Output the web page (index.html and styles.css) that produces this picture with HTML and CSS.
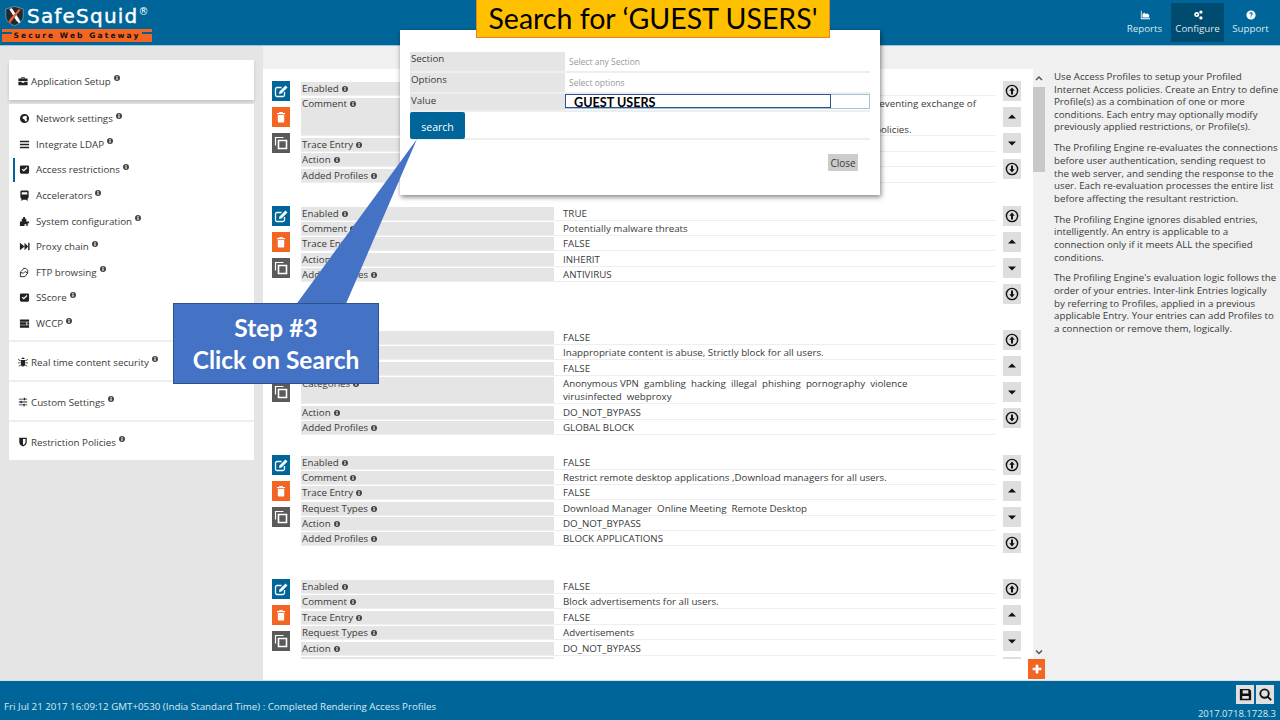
FILE: index.html
```html
<!DOCTYPE html>
<html lang="en">
<head>
	<meta charset="utf-8">
	<title>SafeSquid - Access Profiles</title>
	<link rel="stylesheet" href="styles.css">
</head>
<body>
	<svg class="sprite" xmlns="http://www.w3.org/2000/svg">
		<symbol id="i-info" viewBox="0 0 8 8"><circle cx="4" cy="4" r="4"/><rect x="3.2" y="3.2" width="1.6" height="3.2" fill="#fff"/><rect x="3.2" y="1.4" width="1.6" height="1.2" fill="#fff"/></symbol>
		<symbol id="i-case" viewBox="0 0 12 12"><path d="M4 3V1.5h4V3h3.5v3h-11V3zM5 3h2V2.500H5zM.5 7h4v1h3V7h4v4h-11z"/></symbol>
		<symbol id="i-globe" viewBox="0 0 12 12"><path d="M6 1a5 5 0 1 0 0 10A5 5 0 0 0 6 1zm1 2 2 1-1 2 1 2-2 1.500-1-2.500-2-1V4z"/></symbol>
		<symbol id="i-bars" viewBox="0 0 12 12"><path d="M1 2h10v1.600H1zM1 5.200h10v1.600H1zM1 8.400h10V10H1z"/></symbol>
		<symbol id="i-check" viewBox="0 0 12 12"><path fill-rule="evenodd" d="M2.500 1.500h7a1.500 1.500 0 0 1 1.500 1.500v6a1.500 1.500 0 0 1-1.500 1.500h-7A1.500 1.500 0 0 1 1 9V3a1.500 1.500 0 0 1 1.500-1.500zM3 6l2.200 2.200L9.200 4.300 8.300 3.400 5.200 6.400 3.900 5.100z"/></symbol>
		<symbol id="i-train" viewBox="0 0 12 12"><path fill-rule="evenodd" d="M3 .5h6A1.500 1.500 0 0 1 10.500 2v6A1.500 1.500 0 0 1 9 9.500l1 2H8.500l-.5-1H4l-.5 1H2l1-2A1.500 1.500 0 0 1 1.500 8V2A1.500 1.500 0 0 1 3 .5zM3 2.500V5h6V2.500z"/></symbol>
		<symbol id="i-puzzle" viewBox="0 0 12 12"><path d="M3 3h1.500V1h2v2H8v3h3v2H9.500v3H8V9H6v2H1V6h2z"/></symbol>
		<symbol id="i-forward" viewBox="0 0 12 12"><path d="M1 2 6 6 1 10zM6 2l4 4-4 4zM10 2h1.500v8H10z"/></symbol>
		<symbol id="i-files" viewBox="0 0 12 12"><path fill="none" stroke="#222" d="M4.500 1.500h3l2 2v3M2 5l3-3M1.500 5.500v5h5l3-4-3-1.500-2 2z"/></symbol>
		<symbol id="i-server" viewBox="0 0 12 12"><path d="M1 1.500h10v2.600H1zM1 4.700h7v2.600H1zM9 4.700h2v2.600H9zM1 7.900h10v2.600H1z"/></symbol>
		<symbol id="i-bug" viewBox="0 0 12 12"><path d="M4 2.500a2 2 0 0 1 4 0zM3.500 3.500h5V9A2.500 2.500 0 0 1 6 11.500 2.500 2.500 0 0 1 3.500 9zM.5 2.500l3 2-.5.700-3-2zM11.500 2.500l-3 2 .5.700 3-2zM0 6.500h3v1H0zM9 6.500h3v1H9zM3 9l-2.500 2 .5.500L3.500 10zM9 9l2.500 2-.5.500L8.500 10z"/></symbol>
		<symbol id="i-sliders" viewBox="0 0 12 12"><path d="M1 2h10v1H1zM7 1h1.500v3H7zM1 5.500h10v1H1zM3 4.500h1.500v3H3zM1 9h10v1H1zM6.500 8H8v3H6.500z"/></symbol>
		<symbol id="i-shield" viewBox="0 0 12 12"><path fill-rule="evenodd" d="M1.500 1h9v5c0 3-2.500 4.500-4.500 5.500C4 10.500 1.500 9 1.500 6zM6 2.500v7.200C7.500 9 9 8 9 6V2.500z"/></symbol>
		<symbol id="i-edit" viewBox="0 0 16 16"><path fill="none" stroke="#fff" stroke-width="1.300" d="M11.500 9v3a1.500 1.500 0 0 1-1.500 1.500H4A1.500 1.500 0 0 1 2.500 12V6A1.500 1.500 0 0 1 4 4.500h4.500"/><path fill="#fff" d="M6.500 8.500 12.500 2.500 14.500 4.500 8.500 10.500 6 11z"/></symbol>
		<symbol id="i-trash" viewBox="0 0 16 16"><path fill="#fff" d="M6.500 3h3l.5 1h2v1.200H4V4h2zM4.800 6h6.400v6.500a1 1 0 0 1-1 1H5.800a1 1 0 0 1-1-1z"/></symbol>
		<symbol id="i-copy" viewBox="0 0 16 16"><path fill="none" stroke="#fff" stroke-width="1.200" d="M2.500 10.500v-8h8"/><path fill="none" stroke="#fff" stroke-width="1.600" d="M5.500 5.500h8v8h-8z"/></symbol>
		<symbol id="i-up-c" viewBox="0 0 16 16"><circle cx="8" cy="8" r="5.600" fill="none" stroke="#111" stroke-width="1.400"/><path d="M8 4.500 10.700 7.800H9v3.700H7V7.800H5.300z"/></symbol>
		<symbol id="i-down-c" viewBox="0 0 16 16"><circle cx="8" cy="8" r="5.600" fill="none" stroke="#111" stroke-width="1.400"/><path d="M8 11.500 10.700 8.200H9V4.500H7v3.700H5.300z"/></symbol>
		<symbol id="i-caret-up" viewBox="0 0 16 16"><path d="M8 5.500 12 9.500H4z"/></symbol>
		<symbol id="i-caret-down" viewBox="0 0 16 16"><path d="M8 10.500 12 6.500H4z"/></symbol>
		<symbol id="i-chev-up" viewBox="0 0 8 8"><path fill="none" stroke="#555" stroke-width="1.500" d="M1 6 4 3l3 3"/></symbol>
		<symbol id="i-chev-down" viewBox="0 0 8 8"><path fill="none" stroke="#555" stroke-width="1.500" d="M1 2.500l3 3 3-3"/></symbol>
		<symbol id="i-plus" viewBox="0 0 16 16"><path fill="#fff" d="M6.500 3h3v3.500H13v3H9.500V13h-3V9.500H3v-3h3.500z"/></symbol>
		<symbol id="i-save" viewBox="0 0 16 16"><path fill-rule="evenodd" d="M2 2h10l2 2v10H2zM5 3.500V7h6V3.500zM4.500 9.500v3h7v-3z"/></symbol>
		<symbol id="i-search" viewBox="0 0 16 16"><path fill="none" stroke="#111" stroke-width="2" d="M7 2.500a4.500 4.500 0 1 0 0 9 4.500 4.500 0 0 0 0-9zM10.500 10.500l3.500 3.500"/></symbol>
		<symbol id="i-chart" viewBox="0 0 12 12"><path fill="#fff" d="M1 1h1v9h10v1H1zM3 9V5l2-2 2 2 1.500-1L11 6v3z"/></symbol>
		<symbol id="i-cogs" viewBox="0 0 12 12"><path fill="#fff" fill-rule="evenodd" d="M4.500 2.500a3 3 0 1 0 0 6 3 3 0 0 0 0-6zm0 2a1 1 0 1 1 0 2 1 1 0 0 1 0-2zM9.500 .5a2 2 0 1 0 0 4 2 2 0 0 0 0-4zM9.500 7.500a2 2 0 1 0 0 4 2 2 0 0 0 0-4z"/></symbol>
		<symbol id="i-help" viewBox="0 0 12 12"><path fill="#fff" fill-rule="evenodd" d="M6 .5a5.500 5.500 0 1 0 0 11 5.500 5.500 0 0 0 0-11zM4 4.500C4 3.300 5 2.700 6 2.700s2 .6 2 1.700c0 1.500-1.400 1.300-1.400 2.600H5.400c0-1.800 1.300-1.700 1.300-2.600 0-.4-.3-.6-.7-.6s-.7.2-.8.7zM5.400 7.700h1.200v1.300H5.400z"/></symbol>
	</svg>

	<header class="topbar">
		<div class="logo">
			<div class="logo-top">
				<svg class="logo-shield" viewBox="0 0 24 24"><path fill="#1f2a35" stroke="#8fa3b3" stroke-width=".8" d="M2 4 12 1l10 3v8c0 6-5 9-10 11C7 21 2 18 2 12z"/><path fill="#fff" d="M6 4 9 3l8 12 2 4-2 1-3-3z"/><path fill="#f26522" d="M17 4l2 1-9 11-3 4-2-1 2-4z"/></svg>
				<span class="logo-name">SafeSquid<sup>®</sup></span>
			</div>
			<div class="logo-tag">Secure Web Gateway</div>
		</div>
		<nav class="topnav">
			<a class="topnav-item"><svg><use href="#i-chart"/></svg>Reports</a>
			<a class="topnav-item active"><svg><use href="#i-cogs"/></svg>Configure</a>
			<a class="topnav-item"><svg><use href="#i-help"/></svg>Support</a>
		</nav>
	</header>

	<div class="workspace">
		<aside class="sidebar">
			<div class="side-card side-head">
				<div class="side-group"><svg class="ic"><use href="#i-case"/></svg>Application Setup<svg class="info"><use href="#i-info"/></svg></div>
			</div>
			<div class="side-card">
				<ul class="side-list">
					<li><svg class="ic"><use href="#i-globe"/></svg>Network settings<svg class="info"><use href="#i-info"/></svg></li>
					<li><svg class="ic"><use href="#i-bars"/></svg>Integrate LDAP<svg class="info"><use href="#i-info"/></svg></li>
					<li class="current"><svg class="ic"><use href="#i-check"/></svg>Access restrictions<svg class="info"><use href="#i-info"/></svg></li>
					<li><svg class="ic"><use href="#i-train"/></svg>Accelerators<svg class="info"><use href="#i-info"/></svg></li>
					<li><svg class="ic"><use href="#i-puzzle"/></svg>System configuration<svg class="info"><use href="#i-info"/></svg></li>
					<li><svg class="ic"><use href="#i-forward"/></svg>Proxy chain<svg class="info"><use href="#i-info"/></svg></li>
					<li><svg class="ic"><use href="#i-files"/></svg>FTP browsing<svg class="info"><use href="#i-info"/></svg></li>
					<li><svg class="ic"><use href="#i-check"/></svg>SScore<svg class="info"><use href="#i-info"/></svg></li>
					<li><svg class="ic"><use href="#i-server"/></svg>WCCP<svg class="info"><use href="#i-info"/></svg></li>
				</ul>
				<div class="side-group bordered"><svg class="ic"><use href="#i-bug"/></svg>Real time content security<svg class="info"><use href="#i-info"/></svg></div>
				<div class="side-group bordered"><svg class="ic"><use href="#i-sliders"/></svg>Custom Settings<svg class="info"><use href="#i-info"/></svg></div>
				<div class="side-group bordered"><svg class="ic"><use href="#i-shield"/></svg>Restriction Policies<svg class="info"><use href="#i-info"/></svg></div>
			</div>
		</aside>

		<main class="content">
			<div class="strip"></div>
			<div class="pane">
				<div class="entries">
					<section class="entry">
						<div class="tools"><a class="tool edit"><svg><use href="#i-edit"/></svg></a><a class="tool del"><svg><use href="#i-trash"/></svg></a><a class="tool dup"><svg><use href="#i-copy"/></svg></a></div>
						<div class="rows">
							<div class="row"><div class="key">Enabled<svg class="info"><use href="#i-info"/></svg></div><div class="val">TRUE</div></div>
							<div class="row tall"><div class="key">Comment<svg class="info"><use href="#i-info"/></svg></div><div class="val">Enforce guest user restrictions on every connection in the network, preventing exchange of<br><br>data that is not allowed by your organisation's internet access usage policies.</div></div>
							<div class="row"><div class="key">Trace Entry<svg class="info"><use href="#i-info"/></svg></div><div class="val">FALSE</div></div>
							<div class="row"><div class="key">Action<svg class="info"><use href="#i-info"/></svg></div><div class="val">INHERIT</div></div>
							<div class="row"><div class="key">Added Profiles<svg class="info"><use href="#i-info"/></svg></div><div class="val">GUEST USERS</div></div>
						</div>
						<div class="movers"><a class="mover"><svg><use href="#i-up-c"/></svg></a><a class="mover"><svg><use href="#i-caret-up"/></svg></a><a class="mover"><svg><use href="#i-caret-down"/></svg></a><a class="mover"><svg><use href="#i-down-c"/></svg></a></div>
					</section>

					<section class="entry">
						<div class="tools"><a class="tool edit"><svg><use href="#i-edit"/></svg></a><a class="tool del"><svg><use href="#i-trash"/></svg></a><a class="tool dup"><svg><use href="#i-copy"/></svg></a></div>
						<div class="rows">
							<div class="row"><div class="key">Enabled<svg class="info"><use href="#i-info"/></svg></div><div class="val">TRUE</div></div>
							<div class="row"><div class="key">Comment<svg class="info"><use href="#i-info"/></svg></div><div class="val">Potentially malware threats</div></div>
							<div class="row"><div class="key">Trace Entry<svg class="info"><use href="#i-info"/></svg></div><div class="val">FALSE</div></div>
							<div class="row"><div class="key">Action<svg class="info"><use href="#i-info"/></svg></div><div class="val">INHERIT</div></div>
							<div class="row"><div class="key">Added Profiles<svg class="info"><use href="#i-info"/></svg></div><div class="val">ANTIVIRUS</div></div>
						</div>
						<div class="movers"><a class="mover"><svg><use href="#i-up-c"/></svg></a><a class="mover"><svg><use href="#i-caret-up"/></svg></a><a class="mover"><svg><use href="#i-caret-down"/></svg></a><a class="mover"><svg><use href="#i-down-c"/></svg></a></div>
					</section>

					<section class="entry">
						<div class="tools"><a class="tool edit"><svg><use href="#i-edit"/></svg></a><a class="tool del"><svg><use href="#i-trash"/></svg></a><a class="tool dup"><svg><use href="#i-copy"/></svg></a></div>
						<div class="rows">
							<div class="row"><div class="key">Enabled<svg class="info"><use href="#i-info"/></svg></div><div class="val">FALSE</div></div>
							<div class="row"><div class="key">Comment<svg class="info"><use href="#i-info"/></svg></div><div class="val">Inappropriate content is abuse, Strictly block for all users.</div></div>
							<div class="row"><div class="key">Trace Entry<svg class="info"><use href="#i-info"/></svg></div><div class="val">FALSE</div></div>
							<div class="row double"><div class="key">Categories<svg class="info"><use href="#i-info"/></svg></div><div class="val">Anonymous VPN &nbsp;gambling &nbsp;hacking &nbsp;illegal &nbsp;phishing &nbsp;pornography &nbsp;violence<br>virusinfected &nbsp;webproxy</div></div>
							<div class="row"><div class="key">Action<svg class="info"><use href="#i-info"/></svg></div><div class="val">DO_NOT_BYPASS</div></div>
							<div class="row"><div class="key">Added Profiles<svg class="info"><use href="#i-info"/></svg></div><div class="val">GLOBAL BLOCK</div></div>
						</div>
						<div class="movers"><a class="mover"><svg><use href="#i-up-c"/></svg></a><a class="mover"><svg><use href="#i-caret-up"/></svg></a><a class="mover"><svg><use href="#i-caret-down"/></svg></a><a class="mover"><svg><use href="#i-down-c"/></svg></a></div>
					</section>

					<section class="entry">
						<div class="tools"><a class="tool edit"><svg><use href="#i-edit"/></svg></a><a class="tool del"><svg><use href="#i-trash"/></svg></a><a class="tool dup"><svg><use href="#i-copy"/></svg></a></div>
						<div class="rows">
							<div class="row"><div class="key">Enabled<svg class="info"><use href="#i-info"/></svg></div><div class="val">FALSE</div></div>
							<div class="row"><div class="key">Comment<svg class="info"><use href="#i-info"/></svg></div><div class="val">Restrict remote desktop applications ,Download managers for all users.</div></div>
							<div class="row"><div class="key">Trace Entry<svg class="info"><use href="#i-info"/></svg></div><div class="val">FALSE</div></div>
							<div class="row"><div class="key">Request Types<svg class="info"><use href="#i-info"/></svg></div><div class="val">Download Manager &nbsp;Online Meeting &nbsp;Remote Desktop</div></div>
							<div class="row"><div class="key">Action<svg class="info"><use href="#i-info"/></svg></div><div class="val">DO_NOT_BYPASS</div></div>
							<div class="row"><div class="key">Added Profiles<svg class="info"><use href="#i-info"/></svg></div><div class="val">BLOCK APPLICATIONS</div></div>
						</div>
						<div class="movers"><a class="mover"><svg><use href="#i-up-c"/></svg></a><a class="mover"><svg><use href="#i-caret-up"/></svg></a><a class="mover"><svg><use href="#i-caret-down"/></svg></a><a class="mover"><svg><use href="#i-down-c"/></svg></a></div>
					</section>

					<section class="entry">
						<div class="tools"><a class="tool edit"><svg><use href="#i-edit"/></svg></a><a class="tool del"><svg><use href="#i-trash"/></svg></a><a class="tool dup"><svg><use href="#i-copy"/></svg></a></div>
						<div class="rows">
							<div class="row"><div class="key">Enabled<svg class="info"><use href="#i-info"/></svg></div><div class="val">FALSE</div></div>
							<div class="row"><div class="key">Comment<svg class="info"><use href="#i-info"/></svg></div><div class="val">Block advertisements for all users.</div></div>
							<div class="row"><div class="key">Trace Entry<svg class="info"><use href="#i-info"/></svg></div><div class="val">FALSE</div></div>
							<div class="row"><div class="key">Request Types<svg class="info"><use href="#i-info"/></svg></div><div class="val">Advertisements</div></div>
							<div class="row"><div class="key">Action<svg class="info"><use href="#i-info"/></svg></div><div class="val">DO_NOT_BYPASS</div></div>
							<div class="row"><div class="key"></div><div class="val"></div></div>
						</div>
						<div class="movers"><a class="mover"><svg><use href="#i-up-c"/></svg></a><a class="mover"><svg><use href="#i-caret-up"/></svg></a><a class="mover"><svg><use href="#i-caret-down"/></svg></a><a class="mover"></a></div>
					</section>
				</div>
				<div class="scrollbar">
					<svg class="scroll-arrow"><use href="#i-chev-up"/></svg>
					<div class="scroll-thumb"></div>
					<svg class="scroll-arrow down"><use href="#i-chev-down"/></svg>
				</div>
				<a class="add-btn"><svg><use href="#i-plus"/></svg></a>
			</div>
		</main>

		<aside class="help">
			<p>Use Access Profiles to setup your Profiled<br>Internet Access policies. Create an Entry to define<br>Profile(s) as a combination of one or more<br>conditions. Each entry may optionally modify<br>previously applied restrictions, or Profile(s).</p>
			<p>The Profiling Engine re-evaluates the connections<br>before user authentication, sending request to<br>the web server, and sending the response to the<br>user. Each re-evaluation processes the entire list<br>before affecting the resultant restriction.</p>
			<p>The Profiling Engine ignores disabled entries,<br>intelligently. An entry is applicable to a<br>connection only if it meets ALL the specified<br>conditions.</p>
			<p>The Profiling Engine's evaluation logic follows the<br>order of your entries. Inter-link Entries logically<br>by referring to Profiles, applied in a previous<br>applicable Entry. Your entries can add Profiles to<br>a connection or remove them, logically.</p>
		</aside>
	</div>

	<footer class="statusbar">
		<div class="status-text">Fri Jul 21 2017 16:09:12 GMT+0530 (India Standard Time) : Completed Rendering Access Profiles</div>
		<div class="status-right">
			<div class="status-btns"><a class="status-btn"><svg><use href="#i-save"/></svg></a><a class="status-btn"><svg><use href="#i-search"/></svg></a></div>
			<div class="version">2017.0718.1728.3</div>
		</div>
	</footer>

	<div class="modal">
		<div class="modal-row"><div class="modal-key">Section</div><div class="modal-val">Select any Section</div></div>
		<div class="modal-row"><div class="modal-key">Options</div><div class="modal-val">Select options</div></div>
		<div class="modal-row last"><div class="modal-key">Value</div><div class="modal-input"><div class="modal-typed">GUEST USERS</div></div></div>
		<div class="modal-actions"><a class="search-btn">search</a></div>
		<div class="modal-foot"><a class="close-btn">Close</a></div>
	</div>

	<div class="title-note">Search for ‘GUEST USERS'</div>

	<svg class="step-tail" viewBox="0 0 130 170"><path d="M1 168 123 1 51 168z" fill="#4472c4"/></svg>
	<div class="step-note">Step #3<br>Click on Search</div>
</body>
</html>
```

FILE: styles.css
```css
*{
	margin: 0;
	padding: 0;
	box-sizing: border-box;
}
body{
	width: 1280px;
	height: 720px;
	overflow: hidden;
	display: flex;
	flex-direction: column;
	position: relative;
	background-color: #fff;
	color: #3a3a3a;
	font-family: "Open Sans", "Liberation Sans", sans-serif;
	font-size: 9.75px;
}
.sprite{
	display: none;
}
svg{
	fill: currentColor;
}

/* header */
.topbar{
	height: 46px;
	flex: none;
	display: flex;
	justify-content: space-between;
	background-color: #006699;
	border-bottom: 1px solid #9fc3d6;
}
.logo{
	width: 152px;
	padding: 3px 0 0 2px;
}
.logo-top{
	height: 26px;
	display: flex;
	align-items: center;
}
.logo-shield{
	width: 21px;
	height: 22px;
	margin-left: 2px;
}
.logo-name{
	margin-left: 2px;
	color: #fff;
	font-family: "DejaVu Sans", sans-serif;
	font-size: 20px;
	letter-spacing: 1.2px;
	-webkit-text-stroke: .4px #fff;
	white-space: nowrap;
}
.logo-name sup{
	font-size: 10px;
	letter-spacing: 0;
	-webkit-text-stroke: 0;
	line-height: 0;
}
.logo-tag{
	height: 13px;
	position: relative;
	background-color: #f26522;
	color: #111;
	font-family: "DejaVu Sans", sans-serif;
	font-size: 7.5px;
	font-weight: bold;
	line-height: 13px;
	letter-spacing: 2.1px;
	text-align: center;
}
.logo-tag::before,
.logo-tag::after{
	content: "";
	position: absolute;
	top: 3px;
	width: 10px;
	height: 1.500px;
	background-color: #0c5d88;
}
.logo-tag::before{
	left: 0;
}
.logo-tag::after{
	right: 0;
}
.topnav{
	display: flex;
	align-items: flex-start;
	padding: 3px 3px 0 0;
}
.topnav-item{
	width: 53px;
	height: 39px;
	padding-top: 7px;
	display: flex;
	flex-direction: column;
	align-items: center;
	color: #dbe9f1;
	font-size: 9.75px;
}
.topnav-item svg{
	width: 10px;
	height: 10px;
	margin-bottom: 2px;
}
.topnav-item.active{
	background-color: #004b70;
}

/* layout */
.workspace{
	flex: 1;
	display: flex;
	min-height: 0;
}
.sidebar{
	width: 263px;
	flex: none;
	padding: 14px 9px 0;
	background-color: #e5e5e5;
}
.content{
	width: 782px;
	flex: none;
	display: flex;
	flex-direction: column;
}
.strip{
	height: 23px;
	background-color: #f0f0f0;
}
.pane{
	flex: 1;
	display: flex;
	position: relative;
	background-color: #fff;
}
.help{
	flex: 1;
	padding: 25px 0 0 9px;
	background-color: #f0f0f0;
	line-height: 12.6px;
	white-space: nowrap;
	overflow: hidden;
}
.help p{
	margin-bottom: 8.4px;
}

/* sidebar */
.side-card{
	background-color: #fff;
}
.side-head{
	height: 40px;
	margin-bottom: 4px;
	box-shadow: 0 2px 3px rgba(0,0,0,.15);
}
.side-group{
	height: 40px;
	padding: 2px 0 0 9px;
	display: flex;
	align-items: center;
}
.side-group.bordered{
	border-top: 2px solid #eee;
}
.side-group .ic{
	width: 10px;
	height: 10px;
	margin-right: 3px;
	color: #222;
}
.side-list{
	list-style: none;
	padding: 2px 0 4px;
}
.side-list li{
	height: 25.6px;
	padding-left: 10px;
	display: flex;
	align-items: center;
	position: relative;
}
.side-list .ic{
	width: 11px;
	height: 11px;
	margin-right: 6px;
	color: #222;
}
.side-list li.current::before{
	content: "";
	position: absolute;
	left: 4px;
	top: 1px;
	width: 1.500px;
	height: 24px;
	background-color: #006699;
}
.info{
	width: 6px;
	height: 6px;
	margin: -6px 0 0 3px;
	color: #444;
}

/* entries */
.entries{
	width: 770px;
	height: 590px;
	padding: 12px 0 0 9px;
	overflow: hidden;
}
.entry{
	height: 124.5px;
	display: flex;
	align-items: flex-start;
}
.tools{
	width: 18px;
	margin-right: 11px;
	flex: none;
	display: flex;
	flex-direction: column;
	gap: 6px;
}
.tool{
	width: 18px;
	height: 20px;
	display: flex;
	align-items: center;
	justify-content: center;
}
.tool svg{
	width: 16px;
	height: 16px;
}
.edit{
	background-color: #006699;
}
.del{
	background-color: #f26522;
}
.dup{
	background-color: #5a5a5a;
}
.rows{
	width: 694px;
	flex: none;
	padding-top: 1px;
}
.row{
	display: grid;
	grid-template-columns: 253px 432px;
	column-gap: 9px;
	margin-bottom: 1.400px;
	border-bottom: 1px solid #eee;
	line-height: 13px;
}
.row.tall{
	padding-top: 1px;
}
.row.tall .key,
.row.tall .val{
	height: 37px;
	line-height: 12.6px;
}
.row.double .key,
.row.double .val{
	height: 26px;
}
.key{
	height: 13px;
	padding-left: 1px;
	background-color: #e5e5e5;
}
.val{
	white-space: nowrap;
}
.movers{
	width: 18px;
	margin-left: 8px;
	flex: none;
	display: flex;
	flex-direction: column;
	gap: 6px;
}
.mover{
	width: 18px;
	height: 20px;
	flex: none;
	display: flex;
	align-items: center;
	justify-content: center;
	background-color: #dedede;
	color: #111;
}
.mover svg{
	width: 16px;
	height: 16px;
}

/* scrollbar */
.scrollbar{
	width: 12px;
	height: 611px;
	display: flex;
	flex-direction: column;
	align-items: center;
	background-color: #f1f1f1;
}
.scroll-arrow{
	width: 8px;
	height: 18px;
}
.scroll-arrow.down{
	height: 14px;
	margin-top: auto;
	margin-bottom: 21px;
}
.scroll-thumb{
	width: 12px;
	height: 85px;
	background-color: #c8c8c8;
}
.add-btn{
	position: absolute;
	right: 0;
	bottom: 1px;
	width: 17px;
	height: 20px;
	display: flex;
	align-items: center;
	justify-content: center;
	background-color: #f26522;
}
.add-btn svg{
	width: 14px;
	height: 14px;
}

/* footer */
.statusbar{
	height: 40px;
	flex: none;
	display: flex;
	justify-content: space-between;
	padding: 4px 4px 0 4px;
	background-color: #006699;
	border-top: 1px solid #cfe0ea;
	color: #dbe9f1;
}
.status-text{
	padding-top: 15px;
}
.status-right{
	display: flex;
	flex-direction: column;
	align-items: flex-end;
}
.status-btns{
	display: flex;
	gap: 2px;
	padding-right: 2px;
}
.status-btn{
	width: 18px;
	height: 19px;
	display: flex;
	align-items: center;
	justify-content: center;
	background-color: #e0e0e0;
	color: #111;
}
.status-btn svg{
	width: 15px;
	height: 15px;
}
.version{
	margin-top: 3px;
	font-size: 9.500px;
}

/* search dialog */
.modal{
	position: absolute;
	left: 400px;
	top: 30px;
	width: 480px;
	height: 165px;
	padding: 22px 10px 0;
	background-color: #fff;
	box-shadow: 1px 2px 5px rgba(0,0,0,.5);
}
.modal-row{
	height: 21px;
	display: grid;
	grid-template-columns: 155px 305px;
	border-bottom: 2px solid #eee;
}
.modal-row.last{
	height: 18px;
}
.modal-key{
	padding-left: 1px;
	background-color: #e5e5e5;
	line-height: 13px;
}
.modal-val{
	padding: 3px 0 0 4px;
	color: #999;
	font-size: 8.5px;
	line-height: 13px;
}
.modal-input{
	height: 15px;
	background-color: #fff;
	border: 1px solid #9fc5dc;
}
.modal-typed{
	width: 266px;
	height: 14px;
	margin: -1px 0 0 -1px;
	padding: 1px 0 0 8px;
	border: 1px solid #2f528f;
	color: #000;
	font-family: Lato, sans-serif;
	font-size: 12.6px;
	font-weight: bold;
	line-height: 13px;
}
.modal-actions{
	height: 28px;
	border-bottom: 2px solid #eee;
}
.search-btn{
	display: block;
	width: 55px;
	height: 27px;
	padding-top: 2px;
	background-color: #006699;
	border-radius: 2px;
	color: #fff;
	font-size: 10.5px;
	line-height: 27px;
	text-align: center;
}
.modal-foot{
	display: flex;
	justify-content: flex-end;
	padding: 14px 12px 0 0;
}
.close-btn{
	width: 30px;
	height: 17px;
	background-color: #ccc;
	font-size: 10px;
	line-height: 18px;
	text-align: center;
}

/* tutorial notes laid over the page */
.title-note{
	position: absolute;
	left: 476px;
	top: -1px;
	width: 354px;
	height: 39px;
	background-color: #ffc000;
	border: 1px solid #ed7d31;
	color: #000;
	font-family: Lato, sans-serif;
	font-size: 28.5px;
	line-height: 37px;
	text-align: center;
	white-space: nowrap;
}
.step-tail{
	position: absolute;
	left: 294px;
	top: 138px;
	width: 130px;
	height: 170px;
}
.step-note{
	position: absolute;
	left: 173px;
	top: 303px;
	width: 206px;
	height: 81px;
	background-color: #4472c4;
	border: 1px solid #2f528f;
	color: #fff;
	font-family: Lato, sans-serif;
	font-size: 24.5px;
	font-weight: bold;
	line-height: 32px;
	padding-top: 8px;
	text-align: center;
}
```
